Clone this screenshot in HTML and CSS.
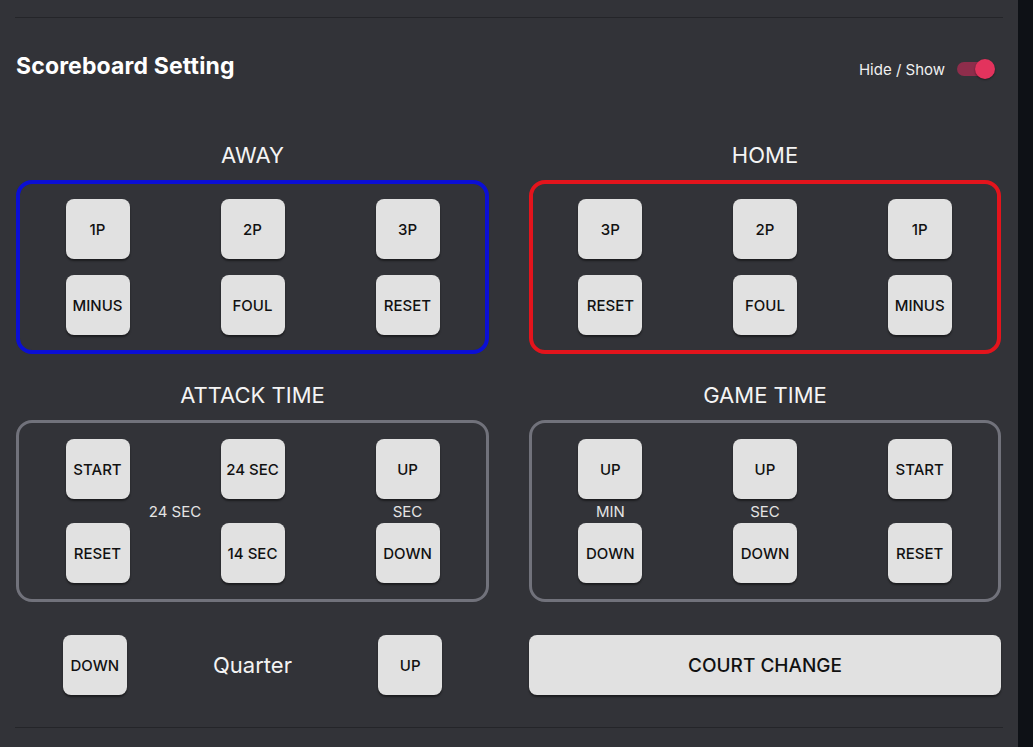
FILE: index.html
```html
<!DOCTYPE html>
<html lang="en">
<head>
    <meta charset="UTF-8">
    <meta name="viewport" content="width=device-width, initial-scale=1.0">
    <title>Scoreboard Setting</title>
    <link rel="stylesheet" href="styles.css">
</head>
<body>
    <div class="app">
        <main class="panel">
            <hr class="divider">

            <!-- Header -->
            <header class="panel-header">
                <h2>Scoreboard Setting</h2>
                <label class="toggle-row">
                    <span>Hide / Show</span>
                    <span class="switch"><span class="knob"></span></span>
                </label>
            </header>

            <div class="controls">
                <!-- Away team -->
                <section class="group">
                    <h3>AWAY</h3>
                    <div class="box box-away">
                        <button class="btn">1P</button>
                        <button class="btn">2P</button>
                        <button class="btn">3P</button>
                        <button class="btn">MINUS</button>
                        <button class="btn">FOUL</button>
                        <button class="btn">RESET</button>
                    </div>
                </section>

                <!-- Home team -->
                <section class="group">
                    <h3>HOME</h3>
                    <div class="box box-home">
                        <button class="btn">3P</button>
                        <button class="btn">2P</button>
                        <button class="btn">1P</button>
                        <button class="btn">RESET</button>
                        <button class="btn">FOUL</button>
                        <button class="btn">MINUS</button>
                    </div>
                </section>

                <!-- Attack time -->
                <section class="group">
                    <h3>ATTACK TIME</h3>
                    <div class="box box-time">
                        <button class="btn c1">START</button>
                        <button class="btn c2">24 SEC</button>
                        <button class="btn c3">UP</button>
                        <span class="value span-12">24 SEC</span>
                        <span class="value c3">SEC</span>
                        <button class="btn c1 r3">RESET</button>
                        <button class="btn c2 r3">14 SEC</button>
                        <button class="btn c3 r3">DOWN</button>
                    </div>
                </section>

                <!-- Game time -->
                <section class="group">
                    <h3>GAME TIME</h3>
                    <div class="box box-time">
                        <button class="btn c1">UP</button>
                        <button class="btn c2">UP</button>
                        <button class="btn c3">START</button>
                        <span class="value c1">MIN</span>
                        <span class="value c2">SEC</span>
                        <button class="btn c1 r3">DOWN</button>
                        <button class="btn c2 r3">DOWN</button>
                        <button class="btn c3 r3">RESET</button>
                    </div>
                </section>

                <!-- Quarter -->
                <div class="quarter">
                    <button class="btn">DOWN</button>
                    <span class="quarter-label">Quarter</span>
                    <button class="btn">UP</button>
                </div>

                <button class="btn court-btn">COURT CHANGE</button>
            </div>

            <hr class="divider divider-bottom">
        </main>
        <aside class="edge"></aside>
    </div>
</body>
</html>
```

FILE: styles.css
```css
/* General Styles */
* {
    margin: 0;
    padding: 0;
    box-sizing: border-box;
    font-family: 'Inter', 'Noto Sans', sans-serif;
}

body {
    background-color: #323338;
    color: #f2f2f2;
    overflow: hidden;
}

.app {
    display: flex;
    min-height: 100vh;
}

.panel {
    width: 1018px;
    padding: 17px 17px 0 16px;
    background-color: #323338;
}

.edge {
    flex: 1;
    background-color: #0e1116;
}

.divider {
    border: none;
    height: 1px;
    background-color: #242529;
    margin: 0 -2px 0 -1px;
}

.divider-bottom {
    margin-top: 32px;
}

/* Header */
.panel-header {
    display: flex;
    justify-content: space-between;
    align-items: center;
    height: 36px;
    margin-top: 30px;
}

.panel-header h2 {
    font-size: 23px;
    font-weight: 700;
    color: #fff;
    letter-spacing: 0.15px;
}

.toggle-row {
    display: flex;
    align-items: center;
    gap: 12px;
    margin: 6px 8px 0 0;
    font-size: 15px;
    color: #f0f0f0;
}

.switch {
    position: relative;
    width: 36px;
    height: 14px;
    border-radius: 7px;
    background-color: #8e2d4b;
}

.knob {
    position: absolute;
    right: -2px;
    top: -3px;
    width: 20px;
    height: 20px;
    border-radius: 50%;
    background-color: #e3335d;
    box-shadow: 0 1px 2px rgba(0, 0, 0, 0.4);
}

/* Controls */
.controls {
    display: grid;
    grid-template-columns: 473px 1fr;
    column-gap: 40px;
    row-gap: 28px;
    margin-top: 58px;
}

.group h3 {
    text-align: center;
    font-size: 22px;
    font-weight: 400;
    line-height: 26px;
    margin-bottom: 12px;
    color: #f4f4f4;
}

.box {
    display: grid;
    grid-template-columns: repeat(3, 1fr);
    row-gap: 16px;
    justify-items: center;
    padding: 15px 0;
    border: 4px solid #71727b;
    border-radius: 16px;
}

.box-away {
    border-color: #0b0fd4;
}

.box-home {
    border-color: #e3141c;
}

.box-time {
    grid-template-columns: repeat(6, 1fr);
    grid-template-rows: 60px 24px 60px;
    row-gap: 0;
    border-width: 3px;
    padding: 16px 1px;
}

.c1 { grid-column: 1 / 3; grid-row: 1; }
.c2 { grid-column: 3 / 5; grid-row: 1; }
.c3 { grid-column: 5 / 7; grid-row: 1; }
.span-12 { grid-column: 2 / 4; grid-row: 2; }
.value.c1, .value.c2, .value.c3 { grid-row: 2; }
.r3 { grid-row: 3; }

.value {
    font-size: 15px;
    line-height: 26px;
    color: #e4e4e4;
}

.btn {
    width: 64px;
    height: 60px;
    border: none;
    border-radius: 8px;
    background-color: #e1e1e1;
    color: #111;
    font-size: 15px;
    font-weight: 500;
    box-shadow: 0 2px 2px rgba(0, 0, 0, 0.45);
    cursor: pointer;
}

.btn:hover {
    background-color: #d2d2d2;
}

/* Bottom row */
.quarter {
    display: grid;
    grid-template-columns: repeat(3, 1fr);
    justify-items: center;
    align-items: center;
    margin-top: 5px;
}

.quarter-label {
    font-size: 22px;
    color: #f4f4f4;
}

.court-btn {
    width: 100%;
    margin-top: 5px;
    font-size: 19px;
}
```
